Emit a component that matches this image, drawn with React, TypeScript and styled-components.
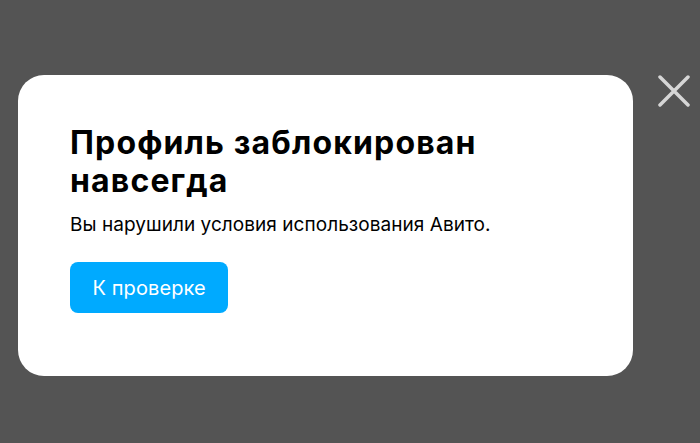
import styled, { createGlobalStyle } from "styled-components";

const GlobalStyle = createGlobalStyle`
    html, body {
        margin: 0;
        padding: 0;
        background: #545454;
        font-family: Inter, "Noto Sans", sans-serif;
    }
`;

const Overlay = styled.div`
    width: 700px;
    height: 443px;
    display: flex;
    align-items: flex-start;
    padding: 75px 0 0 18px;
    box-sizing: border-box;
    gap: 25px;
`;

const Modal = styled.div`
    width: 615px;
    height: 301px;
    box-sizing: border-box;
    background: #fff;
    border-radius: 26px;
    padding: 49px 52px 0;
    display: flex;
    flex-direction: column;
    align-items: flex-start;
`;

const Title = styled.h2`
    margin: 0;
    font-size: 32px;
    line-height: 38px;
    font-weight: 700;
    color: #000;
    letter-spacing: 1.15px;
`;

const Text = styled.p`
    margin: 13px 0 0;
    font-size: 19px;
    line-height: 24px;
    color: #000;
    letter-spacing: 0.05px;
`;

const Button = styled.button`
    margin-top: 25px;
    height: 51px;
    padding: 0 22px 0 22.5px;
    border: none;
    border-radius: 8px;
    background: #00aaff;
    color: #fff;
    font-family: inherit;
    font-size: 20px;
    letter-spacing: 0.1px;
    cursor: pointer;
`;

const Close = styled.button`
    width: 32px;
    height: 32px;
    padding: 0;
    border: none;
    background: none;
    cursor: pointer;
`;

export default function App() {
    return (
        <>
            <GlobalStyle />
            <Overlay>
                <Modal>
                    <Title>Профиль заблокирован<br />навсегда</Title>
                    <Text>Вы нарушили условия использования Авито.</Text>
                    <Button>К проверке</Button>
                </Modal>
                <Close aria-label="Закрыть">
                    <svg width="32" height="32" viewBox="0 0 32 32">
                        <path d="M2 2 L30 30 M30 2 L2 30" stroke="#d6d6d6" strokeWidth="3.5" strokeLinecap="round" />
                    </svg>
                </Close>
            </Overlay>
        </>
    );
}
